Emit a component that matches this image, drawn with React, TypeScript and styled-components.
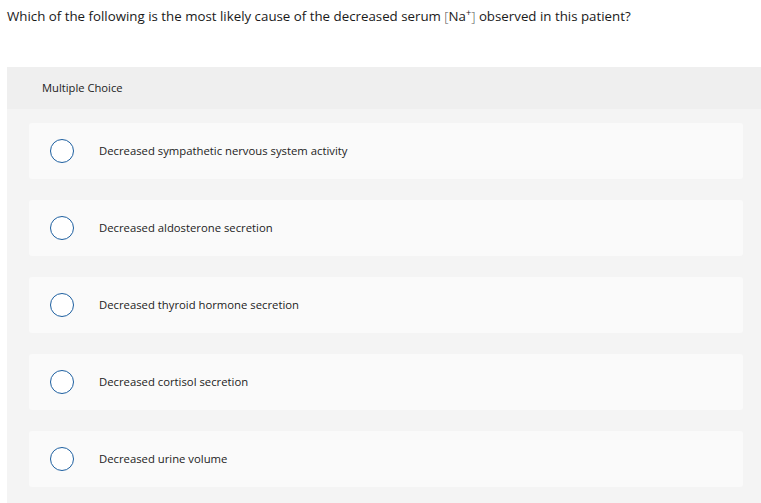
import React from "react";
import styled, { createGlobalStyle } from "styled-components";

const Global = createGlobalStyle`
  html, body { margin: 0; padding: 0; background: #ffffff; }
  body { font-family: "Open Sans", Lato, "Liberation Sans", sans-serif; color: #222; }
`;

const Page = styled.div`
  padding: 7px 0 0 7px;
`;

const Question = styled.p`
  margin: 0;
  font-size: 13.3px;
  line-height: 18px;
  color: #1a1a1a;
`;

const Bracket = styled.span`
  font-weight: 300;
  color: #555;
`;

const Sup = styled.sup`
  font-size: 9px;
  line-height: 0;
`;

const Panel = styled.section`
  margin-top: 42px;
  background: #f4f4f4;
  padding-bottom: 20px;
`;

const Header = styled.div`
  height: 42px;
  display: flex;
  align-items: center;
  padding-left: 35px;
  padding-bottom: 1px;
  box-sizing: border-box;
  background: #efefef;
  font-size: 11.2px;
  color: #222;
`;

const List = styled.div`
  display: flex;
  flex-direction: column;
  gap: 21px;
  padding: 14px 18px 0 22px;
`;

const Card = styled.label`
  height: 56px;
  display: flex;
  align-items: center;
  background: #fafafa;
  border-radius: 3px;
  padding-left: 21px;
  cursor: pointer;
`;

const Radio = styled.span`
  box-sizing: border-box;
  width: 24px;
  height: 24px;
  border-radius: 50%;
  border: 1.5px solid #1d5fa0;
  background: #fff;
  flex: none;
`;

const OptionText = styled.span`
  margin-left: 25px;
  margin-bottom: 1px;
  font-size: 11.3px;
  color: #222;
`;

const options = [
  "Decreased sympathetic nervous system activity",
  "Decreased aldosterone secretion",
  "Decreased thyroid hormone secretion",
  "Decreased cortisol secretion",
  "Decreased urine volume",
];

export default function App() {
  return (
    <>
      <Global />
      <Page>
        <Question>
          Which of the following is the most likely cause of the decreased serum{" "}
          <Bracket>[</Bracket>Na<Sup>+</Sup>
          <Bracket>]</Bracket> observed in this patient?
        </Question>
        <Panel>
          <Header>Multiple Choice</Header>
          <List>
            {options.map((o) => (
              <Card key={o}>
                <Radio />
                <OptionText>{o}</OptionText>
              </Card>
            ))}
          </List>
        </Panel>
      </Page>
    </>
  );
}
